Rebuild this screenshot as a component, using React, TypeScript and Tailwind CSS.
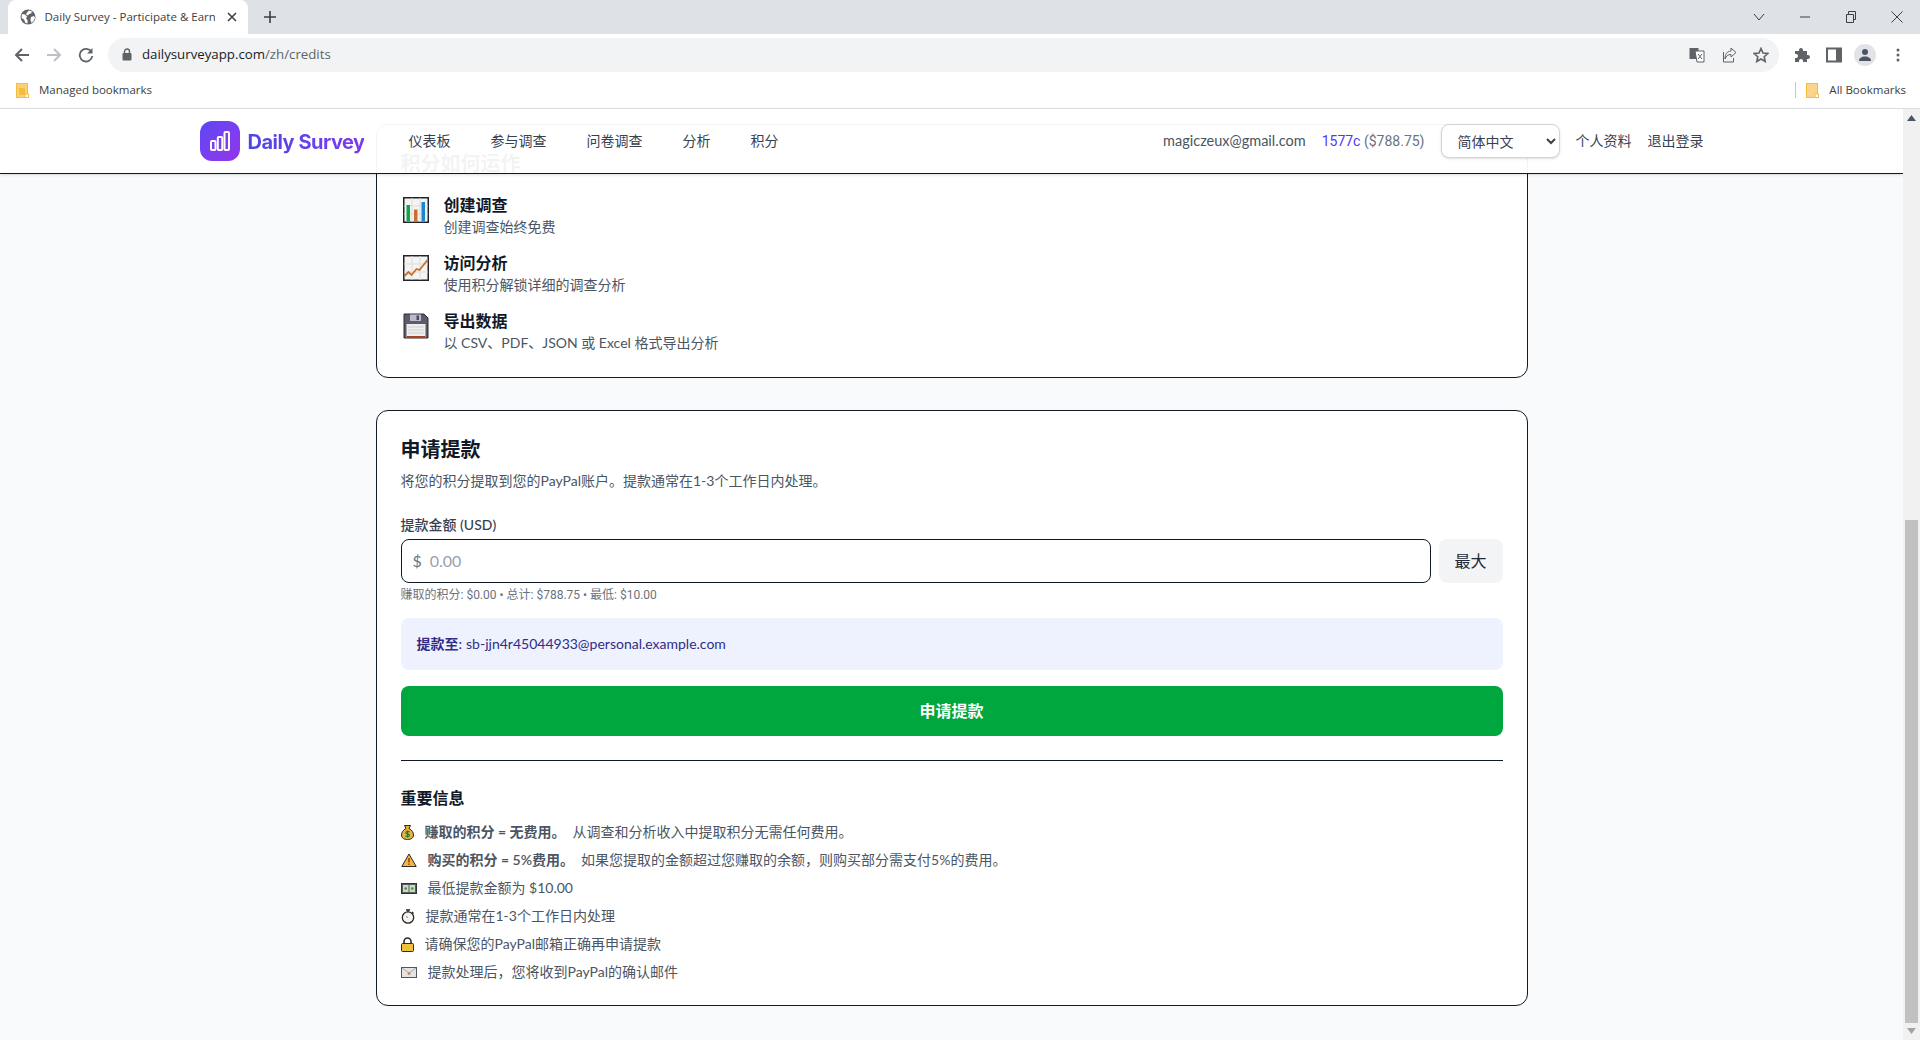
const FONT = "font-['Lato','Noto_Sans_CJK_SC',sans-serif]";

function Globe() {
  return (
    <svg width="16" height="16" viewBox="0 0 16 16">
      <circle cx="8" cy="8" r="7.5" fill="#5f6368" />
      <path d="M2 5l3 .5 2 2-1 2 1.500 1.500V14.500L5.500 14 4 10.500 1.500 9zM9 1.500l3 1-1 2-2 .5-1 1.500-2-1 1-2zM11 8l3-1 1 2-2 4-2 .5-.5-3z" fill="#fff" />
    </svg>
  );
}

function Folder({light}: {light?: boolean}) {
  return (
    <svg width="13" height="15" viewBox="0 0 13 15">
      <rect x="0.500" y="0.500" width="11" height="14" fill={light ? "#fbd38d" : "#fbd078"} stroke="#f5bd3c" />
      <rect x="9" y="11" width="3.500" height="3.500" fill="#fff" stroke="#f5bd3c" />
      {light ? null : <path d="M3 5h6v7H3z" fill="#f5bd3c" />}
    </svg>
  );
}

function BrowserChrome() {
  return (
    <div className="font-['Open_Sans',sans-serif] shrink-0">
      <div className="h-[34px] bg-[#dee1e6] flex items-end pl-2">
        <div className="w-[240px] h-[34px] mt-0 bg-white rounded-t-lg flex items-center pl-3">
          <Globe />
          <span className="ml-[8.500px] w-[170px] overflow-hidden whitespace-nowrap text-[11.500px] text-[#3c4043]">
            Daily Survey - Participate &amp; Earn
          </span>
          <svg className="ml-3" width="10" height="10" viewBox="0 0 10 10">
            <path d="M1 1l8 8M9 1l-8 8" stroke="#3c4043" strokeWidth="1.600" />
          </svg>
        </div>
        <svg className="ml-4 mb-[11px]" width="12" height="12" viewBox="0 0 12 12">
          <path d="M6 0v12M0 6h12" stroke="#3c4043" strokeWidth="1.600" />
        </svg>
        <div className="ml-auto h-[34px] flex items-center pr-[17px]">
          <svg width="12" height="8" viewBox="0 0 12 8">
            <path d="M1 1l5 6 5-6" fill="none" stroke="#3c4043" />
          </svg>
          <svg className="ml-[34px]" width="12" height="12" viewBox="0 0 12 12">
            <path d="M1 6h10" stroke="#3c4043" />
          </svg>
          <svg className="ml-[34px]" width="12" height="12" viewBox="0 0 12 12">
            <path d="M1.500 3.500h7v8h-7zM3.500 3.500v-3h7v8h-2" fill="none" stroke="#3c4043" />
          </svg>
          <svg className="ml-[34px]" width="12" height="12" viewBox="0 0 12 12">
            <path d="M0.500 0.500l11 11M11.500 0.500l-11 11" stroke="#3c4043" />
          </svg>
        </div>
      </div>
      <div className="h-[42px] bg-white flex items-center pl-[14px] pb-[3px] pt-[2px]">
        <svg width="16" height="16" viewBox="0 0 16 16">
          <path d="M15 8H2M8 2L2 8l6 6" fill="none" stroke="#5f6368" strokeWidth="2" />
        </svg>
        <svg className="ml-4" width="16" height="16" viewBox="0 0 16 16">
          <path d="M1 8h13M8 2l6 6-6 6" fill="none" stroke="#bdc1c6" strokeWidth="2" />
        </svg>
        <svg className="ml-4" width="16" height="16" viewBox="0 0 16 16">
          <path d="M13.500 5A6.300 6.300 0 1 0 14.300 9" fill="none" stroke="#5f6368" strokeWidth="1.800" />
          <path d="M14.500 1v5.500H9z" fill="#5f6368" />
        </svg>
        <div className="ml-[14px] w-[1671px] h-[34px] rounded-full bg-[#f1f3f4] flex items-center pl-[14px] pr-[10px]">
          <svg width="10" height="13" viewBox="0 0 10 13">
            <path d="M2.500 6V3.500a2.500 2.500 0 0 1 5 0V6" fill="none" stroke="#5f6368" strokeWidth="1.400" />
            <rect x="0.500" y="5" width="9" height="7.500" rx="1" fill="#5f6368" />
          </svg>
          <span className="ml-[10px] text-[13.250px] text-[#202124]">
            dailysurveyapp.com<span className="text-[#5f6368]">/zh/credits</span>
          </span>
          <div className="ml-auto flex items-center gap-4">
            <svg width="16" height="16" viewBox="0 0 16 16">
              <rect x="0.500" y="1" width="9" height="11" fill="#5f6368" />
              <path d="M6 4h9v11H8z" fill="#fff" stroke="#5f6368" />
              <path d="M9 7l4 5M13 7l-4 5" stroke="#5f6368" />
            </svg>
            <svg width="16" height="16" viewBox="0 0 16 16">
              <path d="M10 1l5 4.500-5 4.500V7.500C7 7.500 5 9 4 12c0-5 2-7.500 6-8zM2.500 5v10h10v-4" fill="none" stroke="#5f6368" />
            </svg>
            <svg width="16" height="16" viewBox="0 0 16 16">
              <path d="M8 1.500l2 4.500 4.800.5-3.600 3.200 1 4.800L8 12l-4.200 2.500 1-4.800L1.200 6.500 6 6z" fill="none" stroke="#5f6368" strokeWidth="1.600" />
            </svg>
          </div>
        </div>
        <svg className="ml-[15px]" width="16" height="16" viewBox="0 0 16 16">
          <path d="M1 4h4V3a2 2 0 0 1 4 0v1h4v4h1a2 2 0 0 1 0 4h-1v3H9v-1a2 2 0 0 0-4 0v1H1v-4h1a2 2 0 0 0 0-4H1z" fill="#5f6368" />
        </svg>
        <svg className="ml-4" width="16" height="16" viewBox="0 0 16 16">
          <rect x="1" y="1.500" width="14" height="13" fill="none" stroke="#5f6368" strokeWidth="2" />
          <rect x="10" y="2" width="5" height="12" fill="#5f6368" />
        </svg>
        <div className="ml-[12px] w-[22px] h-[22px] rounded-full bg-[#e1e3e6] flex items-center justify-center">
          <svg width="14" height="14" viewBox="0 0 14 14">
            <circle cx="7" cy="4" r="3" fill="#4b5563" />
            <path d="M1 13c0-3 2.500-4.500 6-4.500s6 1.500 6 4.500z" fill="#4b5563" />
          </svg>
        </div>
        <svg className="ml-[20px]" width="4" height="14" viewBox="0 0 4 14">
          <circle cx="2" cy="2" r="1.500" fill="#5f6368" />
          <circle cx="2" cy="7" r="1.500" fill="#5f6368" />
          <circle cx="2" cy="12" r="1.500" fill="#5f6368" />
        </svg>
      </div>
      <div className="h-[28px] pb-[4px] bg-white border-b border-[#dadce0] flex items-center pl-[16px] pr-[14px] text-[11.500px] text-[#3c4043] box-content">
        <Folder />
        <span className="ml-[10px]">Managed bookmarks</span>
        <div className="ml-auto h-[16px] w-px bg-[#c4c7cc]" />
        <div className="ml-[10px]">
          <Folder light />
        </div>
        <span className="ml-[10px]">All Bookmarks</span>
      </div>
    </div>
  );
}

function BarChartEmoji() {
  return (
    <svg width="26" height="26" viewBox="0 0 26 26">
      <rect x="0.750" y="0.750" width="24.500" height="24.500" fill="#f4f4f2" stroke="#23232b" strokeWidth="1.500" />
      <path d="M1 9h24M1 17h24M9 1v24M17 1v24" stroke="#dcdcdc" />
      <rect x="3.500" y="8" width="3.500" height="16" fill="#0aa64a" />
      <rect x="11" y="12.500" width="3.500" height="11.500" fill="#c8702e" />
      <rect x="18.500" y="5" width="3.500" height="19" fill="#1c87d1" />
    </svg>
  );
}

function LineChartEmoji() {
  return (
    <svg width="26" height="26" viewBox="0 0 26 26">
      <rect x="0.750" y="0.750" width="24.500" height="24.500" fill="#f4f4f2" stroke="#23232b" strokeWidth="1.500" />
      <path d="M1 9h24M1 17h24M9 1v24M17 1v24" stroke="#dcdcdc" />
      <path d="M1.500 21l4-4 3 3 5-6 3 1 8-10" fill="none" stroke="#c8702e" strokeWidth="1.800" />
    </svg>
  );
}

function FloppyEmoji() {
  return (
    <svg width="26" height="26" viewBox="0 0 26 26">
      <path d="M1 1h20l4 4v20H1z" fill="#5a5c6b" stroke="#2a2a34" />
      <rect x="7" y="1.500" width="11" height="6.500" fill="#b9bbc5" />
      <rect x="13.500" y="2.500" width="2.500" height="4.500" fill="#4a4c58" />
      <rect x="3.500" y="11" width="19" height="14" fill="#eeeeee" />
      <path d="M5 14h16M5 17h16M5 20h16" stroke="#cfcfcf" />
      <rect x="3.500" y="23" width="19" height="2" fill="#a8411f" />
    </svg>
  );
}

function MoneyBag() {
  return (
    <svg width="13" height="15" viewBox="0 0 13 15">
      <path d="M3.500 0.500h6L8 3.500c3 1.500 4.500 4 4.500 6.500 0 3-2.500 4.500-6 4.500s-6-1.500-6-4.500C.5 7.500 2 5 5 3.500z" fill="#e8b33a" stroke="#2a2a2a" />
      <path d="M6.500 5.500v7M8.500 7C7.500 6 4.700 6.300 4.700 7.700s3.800 1 3.800 2.600S5.500 12 4.500 11" fill="none" stroke="#11823b" strokeWidth="1.100" />
    </svg>
  );
}

function Warning() {
  return (
    <svg width="16" height="14" viewBox="0 0 16 14">
      <path d="M8 1l7.200 12.500H.8z" fill="#f1b93b" stroke="#2a2a2a" />
      <path d="M8 5v4.500" stroke="#a8321f" strokeWidth="1.500" />
      <path d="M8 10.500v1.500" stroke="#a8321f" strokeWidth="1.300" />
    </svg>
  );
}

function Banknote() {
  return (
    <svg width="16" height="11" viewBox="0 0 16 11">
      <rect x="0.500" y="0.500" width="15" height="10" fill="#5a5c62" stroke="#33343a" />
      <rect x="2" y="2" width="5.500" height="7" fill="#c9dcbc" />
      <rect x="8.500" y="2" width="5.500" height="7" fill="#c9dcbc" />
      <circle cx="4.700" cy="5.500" r="1.300" fill="#4d8a52" />
      <circle cx="11.300" cy="5.500" r="1.300" fill="#4d8a52" />
    </svg>
  );
}

function Stopwatch() {
  return (
    <svg width="14" height="15" viewBox="0 0 14 15">
      <circle cx="7" cy="8.500" r="5.700" fill="#f4f4f4" stroke="#2a2a2a" strokeWidth="1.300" />
      <path d="M5 1h4M7 1v2M11 3l1.500 1.500" stroke="#2a2a2a" strokeWidth="1.300" />
      <path d="M7 8.500l-2-1" stroke="#c8702e" />
    </svg>
  );
}

function Lock() {
  return (
    <svg width="13" height="15" viewBox="0 0 13 15">
      <path d="M3 7V4.500a3.500 3.500 0 0 1 7 0V7" fill="none" stroke="#2a2a2a" strokeWidth="1.600" />
      <rect x="0.500" y="6.500" width="12" height="8" rx="1" fill="#f0c23c" stroke="#2a2a2a" />
    </svg>
  );
}

function Envelope() {
  return (
    <svg width="16" height="11" viewBox="0 0 16 11">
      <rect x="0.500" y="0.500" width="15" height="10" fill="#e4e4e6" stroke="#55565c" />
      <path d="M1 1l7 5 7-5" fill="none" stroke="#a9aab0" />
      <circle cx="8" cy="6.500" r="1.500" fill="#d98a45" />
    </svg>
  );
}

const creditUses = [
  {icon: <BarChartEmoji />, title: "创建调查", text: "创建调查始终免费"},
  {icon: <LineChartEmoji />, title: "访问分析", text: "使用积分解锁详细的调查分析"},
  {icon: <FloppyEmoji />, title: "导出数据", text: "以 CSV、PDF、JSON 或 Excel 格式导出分析"},
];

const infoRows = [
  {icon: <MoneyBag />, gap: "ml-2", bold: "赚取的积分 = 无费用。", text: "从调查和分析收入中提取积分无需任何费用。"},
  {icon: <Warning />, gap: "ml-[11px]", bold: "购买的积分 = 5%费用。", text: "如果您提取的金额超过您赚取的余额，则购买部分需支付5%的费用。"},
  {icon: <Banknote />, gap: "ml-[11px]", text: "最低提款金额为 $10.00"},
  {icon: <Stopwatch />, gap: "ml-[9px]", text: "提款通常在1-3个工作日内处理"},
  {icon: <Lock />, gap: "ml-2", text: "请确保您的PayPal邮箱正确再申请提款"},
  {icon: <Envelope />, gap: "ml-[11px]", text: "提款处理后，您将收到PayPal的确认邮件"},
];

function TopNav() {
  return (
    <div className="absolute top-0 left-0 right-0 h-[65px] bg-white/95 border-b border-[#111827] shadow-sm">
      <div className="max-w-[1536px] h-full mx-auto px-4 flex items-center">
        <div className="w-10 h-10 rounded-xl bg-gradient-to-br from-[#5b46f5] to-[#9333ea] flex items-center justify-center">
          <svg width="22" height="22" viewBox="0 0 22 22" fill="none" stroke="#fff" strokeWidth="2">
            <rect x="2" y="11" width="4.500" height="9" rx="1" />
            <rect x="8.800" y="7" width="4.500" height="13" rx="1" />
            <rect x="15.500" y="2" width="4.500" height="18" rx="1" />
          </svg>
        </div>
        <span className="ml-2 mt-[1px] w-[116px] font-['Inter',sans-serif] text-xl font-bold tracking-tight whitespace-nowrap bg-gradient-to-r from-[#4f46e5] to-[#7c3aed] bg-clip-text text-transparent">
          Daily Survey
        </span>
        <nav className="ml-[45px] flex gap-10 text-sm text-[#374151]">
          <a>仪表板</a>
          <a>参与调查</a>
          <a>问卷调查</a>
          <a>分析</a>
          <a>积分</a>
        </nav>
        <div className="ml-auto flex items-center gap-4 text-sm">
          <span className="text-[14.500px] text-[#4b5563]">magiczeux@gmail.com</span>
          <span className="font-['Roboto',sans-serif] text-[#6b7280]">
            <span className="text-[#4f39f6]">1577c</span> ($788.75)
          </span>
          <select className="w-[119px] h-[34px] pl-3 rounded-lg border border-[#d1d5db] bg-white shadow-sm text-sm text-[#374151]">
            <option>简体中文</option>
          </select>
          <a className="text-[#374151]">个人资料</a>
          <a className="text-[#374151]">退出登录</a>
        </div>
      </div>
    </div>
  );
}

export default function App() {
  return (
    <div className={`h-[1040px] w-full overflow-hidden flex flex-col bg-white ${FONT}`}>
      <BrowserChrome />
      <div className="flex-1 flex min-h-0">
        <div className="relative flex-1 bg-[#f9fafb] pt-[15px] overflow-hidden">
          <div className="max-w-6xl mx-auto flex flex-col gap-8">
            <div className="bg-white border border-[#111827] rounded-xl p-6">
              <h2 className="text-xl font-bold text-[#111827] mb-4">积分如何运作</h2>
              <div className="flex flex-col gap-[14px]">
                {creditUses.map((item) => (
                  <div key={item.title} className="flex items-start">
                    <div className="w-[26px] mt-[4px] mr-[15px] ml-[2px]">{item.icon}</div>
                    <div>
                      <div className="font-semibold text-[#111827]">{item.title}</div>
                      <div className="text-sm text-[#4b5563]">{item.text}</div>
                    </div>
                  </div>
                ))}
              </div>
            </div>

            <div className="bg-white border border-[#111827] rounded-xl px-6 pt-6 pb-[23px]">
              <h2 className="text-xl font-bold text-[#111827] mb-2">申请提款</h2>
              <p className="text-sm text-[#4b5563] mb-6">
                将您的积分提取到您的PayPal账户。提款通常在1-3个工作日内处理。
              </p>
              <label className="block text-sm font-medium text-[#374151] mb-1">提款金额 (USD)</label>
              <div className="flex gap-2">
                <div className="flex-1 h-11 flex items-center pl-[11px] pr-3 border border-[#111827] rounded-lg text-gray-500">
                  <span>$</span>
                  <input className="ml-[8px] flex-1 outline-none placeholder:text-gray-400" placeholder="0.00" />
                </div>
                <button className="w-16 h-11 rounded-lg bg-[#f3f4f6] text-[#1f2937]">最大</button>
              </div>
              <p className="mt-1 font-['Roboto','Noto_Sans_CJK_SC',sans-serif] text-xs text-[#6b7280]">
                赚取的积分: $0.00 • 总计: $788.75 • 最低: $10.00
              </p>
              <div className="mt-[15px] h-[52px] px-4 flex items-center bg-[#eef2ff] rounded-lg text-sm text-[#312c85]">
                <span className="font-semibold mr-1">提款至:</span> sb-jjn4r45044933@personal.example.com
              </div>
              <button className="mt-4 w-full h-[50px] rounded-lg bg-green-600 text-white font-semibold">申请提款</button>
              <div className="mt-6 pt-[25px] border-t border-[#111827]">
                <h3 className="font-semibold text-[#111827] mb-3">重要信息</h3>
                <div className="flex flex-col gap-2 text-sm text-[#4b5563]">
                  {infoRows.map((row) => (
                    <div key={row.text} className="flex items-center h-5">
                      <span className="w-4 flex shrink-0">{row.icon}</span>
                      <span className={row.gap}>
                        {row.bold ? <strong className="font-semibold mr-[7px]">{row.bold}</strong> : null}
                        {row.text}
                      </span>
                    </div>
                  ))}
                </div>
              </div>
            </div>
          </div>
          <TopNav />
        </div>
        <div className="w-[17px] bg-[#f1f1f1] flex flex-col items-center">
          <svg className="mt-[6px]" width="9" height="6" viewBox="0 0 9 6">
            <path d="M4.500 0L9 6H0z" fill="#4b5563" />
          </svg>
          <div className="mt-auto w-[13px] h-[503px] bg-[#c1c1c1]" />
          <svg className="mt-[5px] mb-[6px]" width="9" height="6" viewBox="0 0 9 6">
            <path d="M4.500 6L9 0H0z" fill="#a3a3a3" />
          </svg>
        </div>
      </div>
    </div>
  );
}
